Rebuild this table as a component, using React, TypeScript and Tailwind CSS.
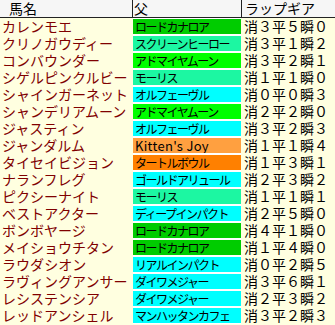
interface Row {
  name: string;
  sire: string;
  lap: string;
  color: string;
  latin?: boolean;
}

const rows: Row[] = [
  { name: 'カレンモエ', sire: 'ロードカナロア', lap: '消３平５瞬０', color: 'bg-[#00cc00]' },
  { name: 'クリノガウディー', sire: 'スクリーンヒーロー', lap: '消３平１瞬２', color: 'bg-[#1cf7a2]' },
  { name: 'コンバウンダー', sire: 'アドマイヤムーン', lap: '消３平２瞬１', color: 'bg-[#00ff00]' },
  { name: 'シゲルピンクルビー', sire: 'モーリス', lap: '消１平１瞬０', color: 'bg-[#1cf7a2]' },
  { name: 'シャインガーネット', sire: 'オルフェーヴル', lap: '消０平０瞬３', color: 'bg-[#00ffff]' },
  { name: 'シャンデリアムーン', sire: 'アドマイヤムーン', lap: '消２平２瞬０', color: 'bg-[#00ff00]' },
  { name: 'ジャスティン', sire: 'オルフェーヴル', lap: '消３平２瞬３', color: 'bg-[#00ffff]' },
  { name: 'ジャンダルム', sire: "Kitten's Joy", lap: '消１平１瞬４', color: 'bg-[#ffa040]', latin: true },
  { name: 'タイセイビジョン', sire: 'タートルボウル', lap: '消１平３瞬１', color: 'bg-[#ff8000]' },
  { name: 'ナランフレグ', sire: 'ゴールドアリュール', lap: '消２平３瞬２', color: 'bg-[#00ffff]' },
  { name: 'ピクシーナイト', sire: 'モーリス', lap: '消１平１瞬１', color: 'bg-[#1cf7a2]' },
  { name: 'ベストアクター', sire: 'ディープインパクト', lap: '消２平５瞬０', color: 'bg-[#00ffff]' },
  { name: 'ボンボヤージ', sire: 'ロードカナロア', lap: '消４平１瞬０', color: 'bg-[#00cc00]' },
  { name: 'メイショウチタン', sire: 'ロードカナロア', lap: '消１平４瞬０', color: 'bg-[#00cc00]' },
  { name: 'ラウダシオン', sire: 'リアルインパクト', lap: '消０平２瞬５', color: 'bg-[#00ffff]' },
  { name: 'ラヴィングアンサー', sire: 'ダイワメジャー', lap: '消３平６瞬１', color: 'bg-[#00ffff]' },
  { name: 'レシステンシア', sire: 'ダイワメジャー', lap: '消２平３瞬２', color: 'bg-[#00ffff]' },
  { name: 'レッドアンシェル', sire: 'マンハッタンカフェ', lap: '消３平２瞬３', color: 'bg-[#00ffff]' },
];

const font = "font-['Noto_Sans_CJK_JP',sans-serif]";

const App = () => (
  <div className={`w-[335px] h-[325px] overflow-hidden bg-[#ffffe0] ${font}`}>
    {/* header */}
    <div className="flex h-[18px] bg-[#f6f6f6] border-b border-[#222] text-[14px] leading-[17px] text-black">
      <div className="w-[132px] pl-[9px]">馬名</div>
      <div className="w-[109px] border-l border-[#222] pl-[1px]">父</div>
      <div className="flex-1 border-l border-[#222] pl-[3px]">ラップギア</div>
    </div>
    {rows.map((r) => (
      <div key={r.name} className="flex h-[17px]">
        <div className="w-[133px] pl-[2px] text-[14px] leading-[17px] text-[#800000] whitespace-nowrap">
          {r.name}
        </div>
        <div className="w-[108px] bg-white py-px">
          <div
            className={`h-[15px] ${r.color} pl-[2px] leading-[15px] text-black whitespace-nowrap overflow-hidden ${
              r.latin ? 'text-[13px] tracking-[0.3px]' : 'text-[12px] tracking-[-1.5px]'
            }`}
          >
            {r.sire}
          </div>
        </div>
        <div className="flex-1 pl-[3px] text-[14px] leading-[17px] text-black whitespace-nowrap">
          {r.lap}
        </div>
      </div>
    ))}
  </div>
);

export default App;
